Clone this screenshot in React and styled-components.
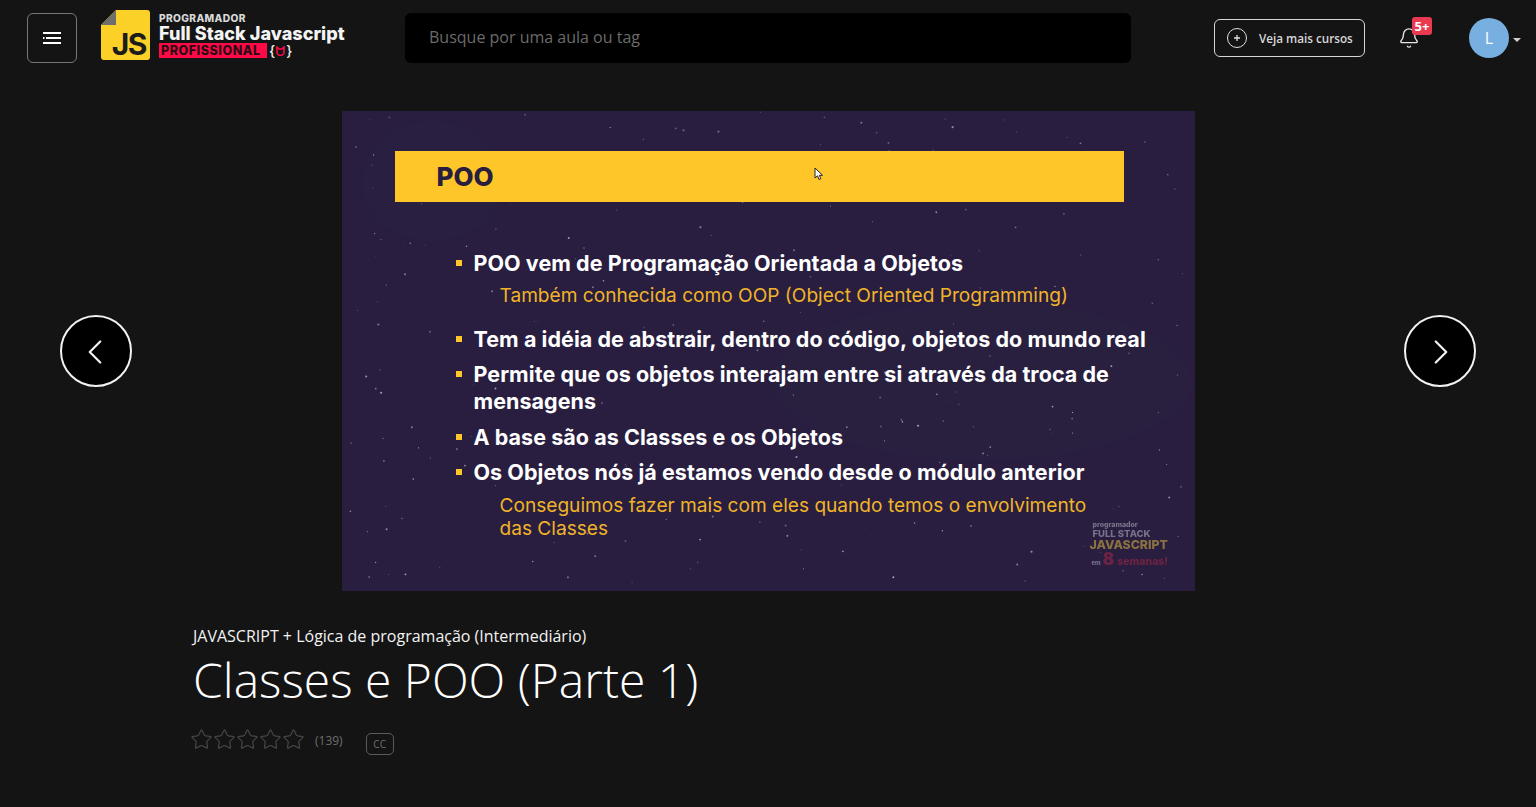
import React from "react";
import styled, { createGlobalStyle } from "styled-components";
import { Bell, ChevronLeft, ChevronRight, Star } from "lucide-react";

const GlobalStyle = createGlobalStyle`
  html, body {
    margin: 0;
    padding: 0;
    background: #141414;
  }
  body {
    font-family: "Open Sans", sans-serif;
    color: #fff;
    overflow: hidden;
  }
  * {
    box-sizing: border-box;
  }
`;

// little pseudo random generator so the star field stays the same on each render
const makeStars = (count) => {
  let seed = 17;
  const next = () => {
    seed = (seed * 9301 + 49297) % 233280;
    return seed / 233280;
  };
  return Array.from({ length: count }, () => ({
    x: next() * 853,
    y: next() * 480,
    r: 0.4 + next() * 0.7,
    o: 0.15 + next() * 0.45,
  }));
};

const stars = makeStars(230);

const slideLines = [
  { text: "POO vem de Programação Orientada a Objetos", top: 0 },
  { text: "Também conhecida como OOP (Object Oriented Programming)", sub: true, top: 7 },
  { text: "Tem a idéia de abstrair, dentro do código, objetos do mundo real", top: 19 },
  { text: "Permite que os objetos interajam entre si através da troca de mensagens", top: 8 },
  { text: "A base são as Classes e os Objetos", top: 9 },
  { text: "Os Objetos nós já estamos vendo desde o módulo anterior", top: 8 },
  { text: "Conseguimos fazer mais com eles quando temos o envolvimento das Classes", sub: true, top: 8 },
];

const App = () => {
  return (
    <Page>
      <GlobalStyle />
      <Header>
        <MenuButton aria-label="menu">
          <svg width="20" height="14" viewBox="0 0 20 14" fill="none" stroke="#fff" strokeWidth="2">
            <path d="M1 2h18M1 7h1.500M4 7h15M1 12h18" />
          </svg>
        </MenuButton>
        <Logo>
          <JsMark>
            <JsText>JS</JsText>
          </JsMark>
          <LogoText>
            <LogoTop>PROGRAMADOR</LogoTop>
            <LogoName>Full Stack Javascript</LogoName>
            <LogoBottom>
              <LogoBadge>PROFISSIONAL</LogoBadge>
              <LogoBrace>
                {"{"}
                <svg width="9" height="10" viewBox="0 0 9 10" fill="none" stroke="#ff0a47" strokeWidth="1.600">
                  <path d="M1 1v5a3.300 3.300 0 0 0 7 0V1L6 3H3Z" />
                </svg>
                {"}"}
              </LogoBrace>
            </LogoBottom>
          </LogoText>
        </Logo>
        <Search placeholder="Busque por uma aula ou tag" />
        <Actions>
          <CoursesButton>
            <svg width="20" height="20" viewBox="0 0 20 20" fill="none" stroke="#e0e0e0" strokeWidth="1">
              <circle cx="10" cy="10" r="9.500" />
              <path d="M10 7v6M7 10h6" strokeWidth="1.300" />
            </svg>
            Veja mais cursos
          </CoursesButton>
          <BellWrap>
            <Bell size={22} strokeWidth={1.5} />
            <Badge>5+</Badge>
          </BellWrap>
          <Avatar>L</Avatar>
          <Caret />
        </Actions>
      </Header>

      <Stage>
        <RoundButton aria-label="anterior" $side="left">
          <ChevronLeft size={42} strokeWidth={1.250} />
        </RoundButton>
        <Slide>
          <StarField width="853" height="480" viewBox="0 0 853 480">
            <ellipse cx="90" cy="70" rx="70" ry="60" fill="#2e2444" opacity="0.2" />
            <ellipse cx="640" cy="270" rx="210" ry="80" fill="#2d2343" opacity="0.2" />
            {stars.map((s, i) => (
              <circle key={i} cx={s.x} cy={s.y} r={s.r} fill="#fff" opacity={s.o} />
            ))}
          </StarField>
          <SlideBar>
            POO
            <Pointer width="10" height="14" viewBox="0 0 10 14">
              <path d="M1 1v10l2.500-2.200L5 12.500l1.800-.8-1.500-3.400H8.500Z" fill="#fff" stroke="#222" strokeWidth="1" />
            </Pointer>
          </SlideBar>
          <SlideList>
            {slideLines.map((line) => (
              <SlideItem key={line.text} $sub={line.sub} $top={line.top}>
                {line.text}
              </SlideItem>
            ))}
          </SlideList>
          <Watermark>
            <WatermarkSmall>programador</WatermarkSmall>
            <WatermarkGrey>FULL STACK</WatermarkGrey>
            <WatermarkGold>JAVASCRIPT</WatermarkGold>
            <WatermarkRed>
              <small>em</small>
              <b>8</b>
              semanas!
            </WatermarkRed>
          </Watermark>
        </Slide>
        <RoundButton aria-label="próxima" $side="right">
          <ChevronRight size={42} strokeWidth={1.250} />
        </RoundButton>
      </Stage>

      <Info>
        <Course>JAVASCRIPT + Lógica de programação (Intermediário)</Course>
        <Title>Classes e POO (Parte 1)</Title>
        <Meta>
          <Stars>
            {[0, 1, 2, 3, 4].map((i) => (
              <Star key={i} size={23} strokeWidth={1.300} />
            ))}
          </Stars>
          <Count>(139)</Count>
          <Caption>CC</Caption>
        </Meta>
      </Info>
    </Page>
  );
};

const Page = styled.div`
  width: 1536px;
  height: 807px;
  background: #141414;
`;

const Header = styled.header`
  display: flex;
  align-items: center;
  height: 76px;
  padding: 0 0 0 27px;
`;

const MenuButton = styled.button`
  display: flex;
  align-items: center;
  justify-content: center;
  width: 50px;
  height: 50px;
  padding: 0;
  background: transparent;
  border: 1px solid #77777b;
  border-radius: 6px;
`;

const Logo = styled.div`
  display: flex;
  align-items: flex-start;
  gap: 9px;
  width: 304px;
  height: 50px;
  margin: 0 0 6px 24px;
`;

const JsMark = styled.div`
  position: relative;
  display: flex;
  align-items: flex-end;
  justify-content: flex-end;
  width: 49px;
  height: 50px;
  padding: 0 4px 1px 0;
  background: #fbd128;
  border-radius: 3px;
  clip-path: polygon(15px 0, 100% 0, 100% 100%, 0 100%, 0 15px);

  &::before {
    content: "";
    position: absolute;
    top: 0;
    left: 0;
    width: 15px;
    height: 15px;
    background: linear-gradient(135deg, transparent 50%, #6e6e6e 50%);
  }
`;

const JsText = styled.span`
  font-family: "Inter", sans-serif;
  font-size: 30px;
  line-height: 30px;
  font-weight: 700;
  letter-spacing: -1.5px;
  color: #1c1c1c;
`;

const LogoText = styled.div`
  display: flex;
  flex-direction: column;
  width: 190px;
  height: 50px;
  padding-top: 3px;
  font-family: "Inter", sans-serif;
  font-weight: 800;
`;

const LogoTop = styled.div`
  font-size: 10.200px;
  line-height: 11px;
  letter-spacing: 0.35px;
  color: #d8d8d8;
`;

const LogoName = styled.div`
  font-size: 18.100px;
  line-height: 18px;
  white-space: nowrap;
  color: #f4f4f4;
`;

const LogoBottom = styled.div`
  display: flex;
  align-items: center;
  gap: 2px;
  margin-top: 1px;
`;

const LogoBadge = styled.div`
  width: 108px;
  height: 15px;
  padding-left: 2px;
  font-size: 12.500px;
  line-height: 15px;
  letter-spacing: 0.55px;
  white-space: nowrap;
  overflow: hidden;
  background: #ff0a47;
  color: #2a0a14;
`;

const LogoBrace = styled.div`
  display: flex;
  align-items: center;
  gap: 1px;
  height: 15px;
  font-size: 14px;
  line-height: 15px;
  font-weight: 500;
  color: #f0f0f0;
`;

const Search = styled.input`
  width: 726px;
  height: 50px;
  padding: 0 24px 2px;
  background: #000;
  border: 0;
  border-radius: 6px;
  outline: none;
  font-family: "Open Sans", sans-serif;
  font-size: 16px;
  color: #fff;

  &::placeholder {
    color: #6b6b6b;
    opacity: 1;
  }
`;

const Actions = styled.div`
  display: flex;
  align-items: center;
  margin-left: 83px;
`;

const CoursesButton = styled.button`
  display: flex;
  align-items: center;
  gap: 12px;
  width: 151px;
  height: 38px;
  padding: 0 0 0 12px;
  background: transparent;
  border: 1px solid #d6d6d6;
  border-radius: 6px;
  font-family: "Open Sans", sans-serif;
  font-size: 11.700px;
  font-weight: 600;
  color: #d8d8d8;
  white-space: nowrap;
`;

const BellWrap = styled.div`
  position: relative;
  display: flex;
  margin-left: 33px;
  color: #e8e8e8;
`;

const Badge = styled.span`
  position: absolute;
  top: -10px;
  left: 14px;
  width: 20px;
  height: 18px;
  background: #e93a51;
  border-radius: 3px;
  font-size: 13px;
  line-height: 18px;
  font-weight: 700;
  text-align: center;
  color: #fff;
`;

const Avatar = styled.div`
  width: 40px;
  height: 40px;
  margin-left: 49px;
  background: #77afe0;
  border-radius: 50%;
  font-size: 16px;
  line-height: 40px;
  text-align: center;
  color: #fff;
`;

const Caret = styled.span`
  width: 0;
  height: 0;
  margin: 3px 0 0 4px;
  border-top: 4px solid #d0d0d0;
  border-left: 4px solid transparent;
  border-right: 4px solid transparent;
`;

const Stage = styled.main`
  display: flex;
  align-items: center;
  justify-content: space-between;
  height: 480px;
  margin-top: 35px;
  padding: 0 60px;
`;

const RoundButton = styled.button`
  display: flex;
  align-items: center;
  justify-content: center;
  width: 72px;
  height: 72px;
  padding: 2px ${(p) => (p.$side === "left" ? 2 : 0)}px 0 ${(p) => (p.$side === "right" ? 2 : 0)}px;
  background: #000;
  border: 2px solid #f2f2f2;
  border-radius: 50%;
  color: #f2f2f2;
`;

const Slide = styled.section`
  position: relative;
  width: 853px;
  height: 480px;
  padding: 40px 53px 0;
  background: #291e3f;
  font-family: "Inter", sans-serif;
  overflow: hidden;
`;

const StarField = styled.svg`
  position: absolute;
  top: 0;
  left: 0;
`;

const SlideBar = styled.div`
  position: relative;
  width: 729px;
  height: 51px;
  padding-left: 42px;
  background: #fec629;
  font-family: "Inter", sans-serif;
  font-size: 26px;
  line-height: 51px;
  font-weight: 800;
  color: #291e3f;
`;

const Pointer = styled.svg`
  position: absolute;
  top: 16px;
  left: 419px;
`;

const SlideList = styled.ul`
  position: relative;
  width: 680px;
  margin: 48px 0 0 79px;
  padding: 0;
  list-style: none;
`;

const SlideItem = styled.li`
  position: relative;
  margin-top: ${(p) => p.$top}px;
  padding-left: ${(p) => (p.$sub ? 26 : 0)}px;
  padding-right: ${(p) => (p.$sub ? 40 : 0)}px;
  font-size: ${(p) => (p.$sub ? 19.1 : 21.5)}px;
  line-height: ${(p) => (p.$sub ? 23 : 27)}px;
  font-weight: ${(p) => (p.$sub ? 400 : 700)};
  letter-spacing: ${(p) => (p.$sub ? 0 : 0.05)}px;
  color: ${(p) => (p.$sub ? "#f0b429" : "#fff")};

  &::before {
    content: "";
    display: ${(p) => (p.$sub ? "none" : "block")};
    position: absolute;
    top: 10px;
    left: -18px;
    width: 6px;
    height: 6px;
    background: #fec629;
  }
`;

const Watermark = styled.div`
  position: absolute;
  top: 409px;
  left: 748px;
  display: flex;
  flex-direction: column;
  font-family: "Inter", sans-serif;
  font-weight: 800;
  white-space: nowrap;
  filter: blur(0.4px);
`;

const WatermarkSmall = styled.span`
  margin-left: 3px;
  font-size: 7px;
  line-height: 9px;
  color: #77728a;
`;

const WatermarkGrey = styled.span`
  margin-left: 3px;
  font-size: 9.500px;
  line-height: 10px;
  color: #77728a;
`;

const WatermarkGold = styled.span`
  font-size: 12.300px;
  line-height: 12px;
  color: #8a7240;
`;

const WatermarkRed = styled.span`
  display: flex;
  align-items: baseline;
  margin: 1px 0 0 2px;
  font-size: 10.500px;
  line-height: 14px;
  color: #6d2343;

  small {
    font-size: 6px;
    color: #77728a;
  }
  b {
    margin: 0 3px 0 2px;
    font-size: 17px;
  }
`;

const Info = styled.div`
  padding: 35px 0 0 193px;
`;

const Course = styled.div`
  margin-bottom: 1px;
  font-size: 16px;
  line-height: 20px;
  font-weight: 400;
  color: #f2f2f2;
`;

const Title = styled.h1`
  margin: 0;
  font-size: 48px;
  line-height: 66px;
  font-weight: 300;
  color: #fff;
`;

const Meta = styled.div`
  display: flex;
  align-items: center;
  margin-top: 11px;
`;

const Stars = styled.div`
  display: flex;
  margin-left: -3px;
  color: #454545;
`;

const Count = styled.span`
  margin: 2px 0 0 10px;
  font-size: 12px;
  color: #6e6e6e;
`;

const Caption = styled.span`
  align-self: flex-start;
  margin: 9px 0 0 23px;
  width: 28px;
  height: 22px;
  border: 1px solid #5a5a5a;
  border-radius: 5px;
  font-size: 10px;
  line-height: 21px;
  text-align: center;
  color: #6e6e6e;
`;

export default App;
